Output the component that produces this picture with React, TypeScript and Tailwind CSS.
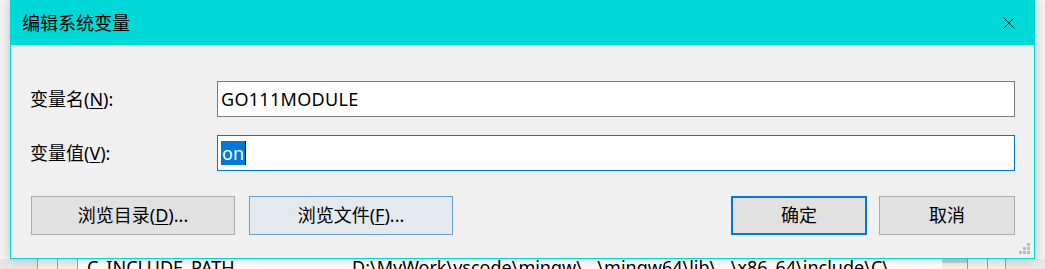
import { X } from 'lucide-react'

const font = { fontFamily: '"Noto Sans", "Noto Sans CJK SC", sans-serif' }

function Btn({ children, className }: { children: React.ReactNode; className: string }) {
  return (
    <button className={`h-[39px] flex items-center justify-center text-[18px] text-black ${className}`}>
      {children}
    </button>
  )
}

export default function App() {
  return (
    <div className="w-[1045px] h-[269px] overflow-hidden bg-[#f2f2f2] flex flex-col" style={font}>
      {/* dialog */}
      <div className="relative z-10 ml-[10px] w-[1025px] h-[259px] shrink-0 flex flex-col border-x border-b border-[#00d8d8] bg-[#f0f0f0] shadow-[0_0_10px_rgba(0,0,0,0.22)]">
        <div className="h-[45px] shrink-0 bg-[#00d8d8] flex items-center justify-between pl-[11px] pr-[15px]">
          <span className="text-[18px] text-black leading-none">编辑系统变量</span>
          <X className="w-[20px] h-[20px] text-black" strokeWidth={1} />
        </div>

        <div className="flex-1 flex flex-col pt-[36px] px-[19px]">
          <div className="flex items-center h-[36px]">
            <label className="w-[187px] text-[18px] text-black">
              变量名(<span className="underline underline-offset-2">N</span>):
            </label>
            <div className="flex-1 h-[36px] bg-white border border-[#7a7a7a] flex items-center pl-[3px] text-[18px] text-black tracking-[0.3px]">
              GO111MODULE
            </div>
          </div>

          <div className="flex items-center h-[36px] mt-[18px]">
            <label className="w-[187px] text-[18px] text-black">
              变量值(<span className="underline underline-offset-2">V</span>):
            </label>
            <div className="flex-1 h-[36px] bg-white border border-[#0078d7] flex items-center pl-[3px] text-[18px]">
              <span className="bg-[#0078d7] text-white leading-[24px] px-[1px]">on</span>
              <span className="w-px h-[24px] bg-black" />
            </div>
          </div>

          <div className="flex items-center mt-[25px] pl-[1px]">
            <Btn className="w-[204px] bg-[#e1e1e1] border border-[#adadad]">
              浏览目录(<span className="underline underline-offset-2">D</span>)...
            </Btn>
            <Btn className="w-[204px] ml-[14px] bg-[#e3e9ef] border border-[#6f9bc8]">
              浏览文件(<span className="underline underline-offset-2">F</span>)...
            </Btn>
            <div className="flex-1" />
            <Btn className="w-[136px] bg-[#e1e1e1] border-2 border-[#0078d7]">确定</Btn>
            <Btn className="w-[136px] ml-[12px] bg-[#e1e1e1] border border-[#adadad]">取消</Btn>
          </div>
        </div>

        {/* resize grip */}
        <svg className="absolute right-[3px] bottom-[3px]" width="12" height="12" viewBox="0 0 12 12">
          <g fill="#bcbcbc">
            <rect x="8" y="0" width="3" height="3" />
            <rect x="4" y="4" width="3" height="3" />
            <rect x="8" y="4" width="3" height="3" />
            <rect x="0" y="8" width="3" height="3" />
            <rect x="4" y="8" width="3" height="3" />
            <rect x="8" y="8" width="3" height="3" />
          </g>
        </svg>
      </div>

      {/* window behind */}
      <div className="h-[10px] flex overflow-hidden">
        <div className="w-[38px] bg-[#e6e6e6] border-r border-[#a0a0a0]" />
        <div className="w-[20px] bg-[#f0f0f0] border-r border-[#a0a0a0]" />
        <div className="w-[20px] bg-[#f0f0f0] border-r border-[#a0a0a0]" />
        <div className="relative w-[864px] bg-white overflow-hidden">
          <span className="absolute left-[9px] -top-[1px] text-[18px] leading-none text-black whitespace-nowrap">C_INCLUDE_PATH</span>
          <span className="absolute left-[274px] -top-[1px] text-[18px] leading-none text-black whitespace-nowrap">
            D:\MyWork\vscode\mingw\...\mingw64\lib\...\x86_64\include\C\
          </span>
        </div>
        <div className="w-[25px] bg-[#f0f0f0] flex flex-col">
          <div className="h-[4px] bg-[#cdcdcd]" />
        </div>
        <div className="w-[20px] bg-[#f0f0f0] border-l border-[#a0a0a0]" />
        <div className="w-[19px] bg-[#f0f0f0] border-l border-[#a0a0a0] border-r" />
        <div className="flex-1 bg-[#e8e8e8]" />
      </div>
    </div>
  )
}
